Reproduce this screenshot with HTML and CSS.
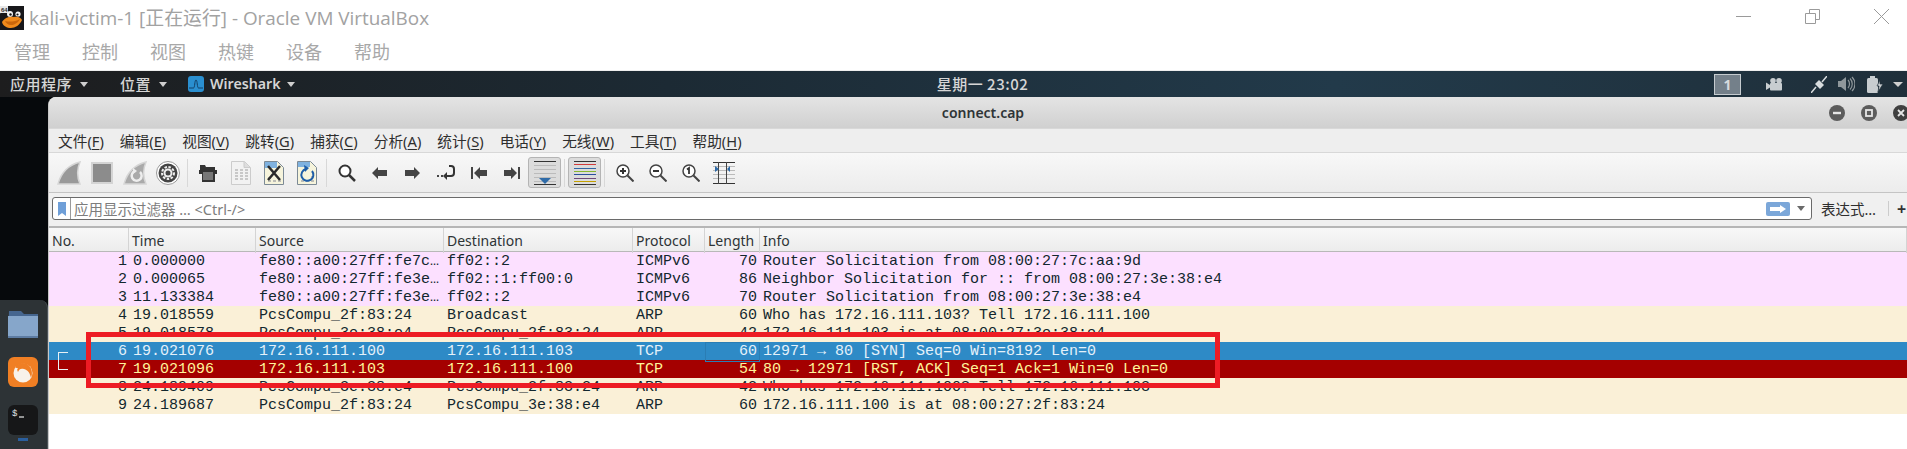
FILE: index.html
```html
<!DOCTYPE html>
<html lang="zh">
<head>
<meta charset="utf-8">
<title>kali-victim-1 - Oracle VM VirtualBox</title>
<link rel="stylesheet" href="styles.css">
</head>
<body>
<header class="vbox">
  <div class="vbox-title">
    <svg class="tux" width="24" height="24" viewBox="0 0 24 24">
      <rect width="24" height="24" fill="#5a5a5a"/>
      <path d="M8 0h16v24H0V8z" fill="#17171a"/>
      <rect width="8" height="7" fill="#e8e8e8"/>
      <text x="1" y="6" class="tux-badge">64</text>
      <circle cx="10" cy="8" r="3" fill="#f4f4f4"/>
      <circle cx="18" cy="8" r="2.600" fill="#f4f4f4"/>
      <circle cx="10.500" cy="8.500" r="1.200" fill="#111"/>
      <circle cx="17.500" cy="8.500" r="1.100" fill="#111"/>
      <path d="M2 16c3-5 8-6 12-5 4-1 7 1 8 3-2 5-7 8-11 8-4 0-8-2-9-6z" fill="#ef8a1c"/>
      <path d="M5 15c4 1 10 1 15-2-2 4-6 6-9 6-3 0-5-2-6-4z" fill="#c9660c"/>
    </svg>
    <h1 class="vbox-name">kali-victim-1 [正在运行] - Oracle VM VirtualBox</h1>
    <div class="vbox-controls">
      <svg width="15" height="15" viewBox="0 0 15 15"><path d="M0 7.500h15" stroke="#9a9a9a" fill="none"/></svg>
      <svg width="15" height="15" viewBox="0 0 15 15"><path d="M.5 4.500h10v10H.5zM4.500 4.500V.5h10v10h-4" stroke="#9a9a9a" fill="none"/></svg>
      <svg width="15" height="15" viewBox="0 0 15 15"><path d="M0 0l15 15M15 0L0 15" stroke="#9a9a9a" fill="none"/></svg>
    </div>
  </div>
  <nav class="vbox-menu"><span>管理</span><span>控制</span><span>视图</span><span>热键</span><span>设备</span><span>帮助</span></nav>
</header>

<div class="guest">
  <div class="panel">
    <div class="panel-left">
      <span class="panel-item">应用程序<i class="caret"></i></span>
      <span class="panel-item">位置<i class="caret"></i></span>
      <span class="panel-item panel-app">
        <svg width="16" height="16" viewBox="0 0 16 16"><rect width="16" height="16" rx="3" fill="#2a8fd0"/><path d="M1 12h4.500c1.500 0 1-8 2.500-8s1 8 2.500 8H15" stroke="#123f66" fill="none"/></svg>
        Wireshark<i class="caret"></i>
      </span>
    </div>
    <div class="panel-clock">星期一 23:02</div>
    <div class="panel-right">
      <span class="workspace">1</span>
      <svg class="ind-cam" width="16" height="13" viewBox="0 0 16 13"><circle cx="7" cy="2.800" r="2.800" fill="#c8cdd0"/><circle cx="13" cy="2.800" r="2.800" fill="#c8cdd0"/><rect x="4" y="5" width="12" height="7.500" rx="1" fill="#c8cdd0"/><path d="M0 4.500l4 2.500v2.500L0 12z" fill="#c8cdd0"/></svg>
      <svg class="ind-plug" width="16" height="17" viewBox="0 0 16 17"><path d="M0 17l5-6M11 6l5-6" stroke="#d8dcde" stroke-width="1.500" fill="none"/><path d="M4 8l4-4 5 5-4 4z" fill="#d8dcde"/></svg>
      <svg class="ind-vol" width="17" height="16" viewBox="0 0 17 16"><path d="M0 5h3l5-4v14l-5-4H0z" fill="#8f979b"/><path d="M10 4c2 2 2 6 0 8M12 2.500c3 3 3 8 0 11M14 1c4 4 4 10 0 14" stroke="#8f979b" stroke-width="1.200" fill="none"/></svg>
      <svg class="ind-bat" width="16" height="17" viewBox="0 0 16 17"><rect x="3" y="0" width="5" height="2" fill="#c8cdd0"/><rect x="0" y="2" width="11" height="15" rx="1.500" fill="#c8cdd0"/><path d="M13 4l-3 6h2l-1 6 5-8h-3z" fill="#c8cdd0" stroke="#1f2f3a" stroke-width=".7"/></svg>
      <i class="caret caret-big"></i>
    </div>
  </div>

  <div class="desktop">
    <aside class="dock-col">
      <div class="dock">
        <svg class="dock-folder" width="30" height="27" viewBox="0 0 30 27"><path d="M1 0h12l3 3h14v24H0z" fill="#46668f"/><path d="M0 5h30v22H0z" fill="#86a6ca"/><path d="M0 25h30v2H0z" fill="#5d7ca3"/></svg>
        <svg width="30" height="30" viewBox="0 0 30 30"><rect width="30" height="30" rx="6" fill="#f07f24"/><circle cx="15" cy="16" r="9.500" fill="#f8f2ea"/><path d="M7 10c3-4 8-5 12-3 5 3 6 9 4 14-1-5-3-8-7-9-3-1-5 0-6 3-1-2-1-3 0-4-1 0-2 0-3-1z" fill="#f07f24"/><circle cx="15.500" cy="17" r="3.500" fill="#f8f2ea"/></svg>
        <svg width="30" height="30" viewBox="0 0 30 30"><rect width="30" height="30" rx="6" fill="#161718"/><text x="4" y="11" class="term-prompt">$</text><path d="M11 12h5" stroke="#e8e8e8" stroke-width="1.200"/></svg>
        <i class="dock-dot"></i>
      </div>
    </aside>

    <main class="ws-window">
      <div class="ws-titlebar">
        <span class="ws-title">connect.cap</span>
        <div class="ws-btns">
          <svg width="16" height="16" viewBox="0 0 16 16"><circle cx="8" cy="8" r="8" fill="#5c5c5c"/><rect x="4" y="6.800" width="8" height="2.400" fill="#e6e6e6"/></svg>
          <svg width="16" height="16" viewBox="0 0 16 16"><circle cx="8" cy="8" r="8" fill="#5c5c5c"/><rect x="5" y="5" width="6" height="6" fill="none" stroke="#e6e6e6" stroke-width="1.800"/></svg>
          <svg width="16" height="16" viewBox="0 0 16 16"><circle cx="8" cy="8" r="8" fill="#3f3f3f"/><path d="M5 5l6 6M11 5l-6 6" stroke="#e6e6e6" stroke-width="1.800"/></svg>
        </div>
      </div>

      <nav class="ws-menu">
        <span>文件(<u>F</u>)</span><span>编辑(<u>E</u>)</span><span>视图(<u>V</u>)</span><span>跳转(<u>G</u>)</span><span>捕获(<u>C</u>)</span><span>分析(<u>A</u>)</span><span>统计(<u>S</u>)</span><span>电话(<u>Y</u>)</span><span>无线(<u>W</u>)</span><span>工具(<u>T</u>)</span><span>帮助(<u>H</u>)</span>
      </nav>

      <div class="ws-toolbar">
        <span class="tb"><svg width="24" height="24" viewBox="0 0 24 24"><path d="M1 23C4 12 11 4 23 1c-3 7-3 15 0 22z" fill="#999" stroke="#d6d6d6" stroke-width="1.500"/></svg></span>
        <span class="tb"><svg width="22" height="22" viewBox="0 0 22 22"><rect x="1" y="1" width="20" height="20" fill="#8c8c8c" stroke="#d4d4d4" stroke-width="2"/></svg></span>
        <span class="tb"><svg width="24" height="24" viewBox="0 0 24 24"><path d="M1 23C4 12 11 4 23 1c-3 7-3 15 0 22z" fill="#aaa" stroke="#d6d6d6" stroke-width="1.500"/><path d="M17 11a5 5 0 1 1-5-1" fill="none" stroke="#eee" stroke-width="2.500"/><path d="M10 7l4 3-4 3z" fill="#eee"/></svg></span>
        <span class="tb"><svg width="24" height="24" viewBox="0 0 24 24"><circle cx="12" cy="12" r="11.500" fill="#fff" stroke="#999"/><circle cx="12" cy="12" r="9.500" fill="#444"/><circle cx="12" cy="12" r="6" fill="none" stroke="#eee" stroke-width="2" stroke-dasharray="2.500 1.500"/><circle cx="12" cy="12" r="4.500" fill="#eee"/><circle cx="12" cy="12" r="2.500" fill="#444"/></svg></span>
        <span class="tb-sep"></span>
        <span class="tb"><svg width="18" height="20" viewBox="0 0 18 20"><path d="M1 2h5l1 2h9v3H1z" fill="#333"/><path d="M0 7h18v4h-2v8H3v-8H0z" fill="#333"/><rect x="4" y="9" width="10" height="8" fill="#777"/></svg></span>
        <span class="tb"><svg width="20" height="24" viewBox="0 0 20 24"><path d="M.5.5h13l6 6v17H.5z" fill="#f2f2f2" stroke="#ccc"/><path d="M13 .5v6h6" fill="#ddd" stroke="#ccc"/><path d="M4 9h3M9 9h3M14 9h3M4 12h3M9 12h3M14 12h3M4 15h3M9 15h3M14 15h3M4 18h3M9 18h3M14 18h3" stroke="#bbb" stroke-width="1.500" fill="none"/></svg></span>
        <span class="tb"><svg width="20" height="24" viewBox="0 0 20 24"><path d="M.5.5h13l6 6v17H.5z" fill="#f6f4dc" stroke="#7c8a96"/><path d="M1 1h12v6H1z" fill="#7fb2e0"/><path d="M4 17h3M9 20h3M14 20h3M4 20h3" stroke="#aaa" stroke-width="1.500" fill="none"/><path d="M4 5l12 14M16 5L4 19" stroke="#2b2b2b" stroke-width="2.500" fill="none"/></svg></span>
        <span class="tb"><svg width="20" height="24" viewBox="0 0 20 24"><path d="M.5.5h13l6 6v17H.5z" fill="#f6f4dc" stroke="#7c8a96"/><path d="M1 1h12v5H1z" fill="#7fb2e0"/><path d="M4 20h3M9 20h3M14 20h3M14 16h3" stroke="#aaa" stroke-width="1.500" fill="none"/><path d="M15 10a6 6 0 1 1-6-2" fill="none" stroke="#1e5ea8" stroke-width="2"/><path d="M7 4l5 3-4 4z" fill="#1e5ea8"/></svg></span>
        <span class="tb-sep"></span>
        <span class="tb"><svg width="18" height="18" viewBox="0 0 18 18"><circle cx="7" cy="7" r="5.500" fill="#fff" stroke="#333" stroke-width="2"/><path d="M11 11l6 6" stroke="#333" stroke-width="2.500"/></svg></span>
        <span class="tb"><svg width="15" height="12" viewBox="0 0 15 12"><path d="M0 6l6-6v3h9v6H6v3z" fill="#444"/></svg></span>
        <span class="tb"><svg width="15" height="12" viewBox="0 0 15 12"><path d="M15 6L9 0v3H0v6h9v3z" fill="#444"/></svg></span>
        <span class="tb"><svg width="18" height="16" viewBox="0 0 18 16"><path d="M0 10h2v2H0zM4 10h2v2H4z" fill="#444"/><path d="M12 1h2a3 3 0 0 1 3 3v4a3 3 0 0 1-3 3H9" stroke="#333" stroke-width="2" fill="none"/><path d="M10 7v8l-4-4z" fill="#333"/></svg></span>
        <span class="tb"><svg width="16" height="14" viewBox="0 0 16 14"><rect y="1" width="2" height="12" fill="#444"/><path d="M3 7l6-6v3h7v6H9v3z" fill="#444"/></svg></span>
        <span class="tb"><svg width="16" height="14" viewBox="0 0 16 14"><rect x="14" y="1" width="2" height="12" fill="#444"/><path d="M13 7L7 1v3H0v6h7v3z" fill="#444"/></svg></span>
        <span class="tb tb-on"><svg width="22" height="24" viewBox="0 0 22 24"><path d="M0 .5h22M0 23.500h22" stroke="#333" fill="none"/><path d="M0 4.500h22M0 8.500h22M0 12.500h22M0 16.500h22M0 20.500h22" stroke="#bbb" fill="none"/><path d="M5 17h12l-6 6z" fill="#2f6ba8"/></svg></span>
        <span class="tb-sep"></span>
        <span class="tb tb-on"><svg width="22" height="24" viewBox="0 0 22 24"><path d="M0 .5h22M0 23.500h22" stroke="#333" fill="none"/><path d="M0 3.500h22" stroke="#d23b3b"/><path d="M0 7.500h22" stroke="#3465a4"/><path d="M0 10.500h22" stroke="#8ab62e"/><path d="M0 13.500h22" stroke="#2c4f9e"/><path d="M0 17.500h22" stroke="#6f4a7a"/><path d="M0 20.500h22" stroke="#c4a000"/></svg></span>
        <span class="tb-sep"></span>
        <span class="tb"><svg width="18" height="18" viewBox="0 0 18 18"><circle cx="7" cy="7" r="6" fill="#fff" stroke="#444" stroke-width="1.500"/><path d="M11.500 11.500l6 6" stroke="#444" stroke-width="2"/><path d="M4 7h6M7 4v6" stroke="#333" stroke-width="2"/></svg></span>
        <span class="tb"><svg width="18" height="18" viewBox="0 0 18 18"><circle cx="7" cy="7" r="6" fill="#fff" stroke="#444" stroke-width="1.500"/><path d="M11.500 11.500l6 6" stroke="#444" stroke-width="2"/><path d="M4 7h6" stroke="#333" stroke-width="2"/></svg></span>
        <span class="tb"><svg width="18" height="18" viewBox="0 0 18 18"><circle cx="7" cy="7" r="6" fill="#fff" stroke="#444" stroke-width="1.500"/><path d="M11.500 11.500l6 6" stroke="#444" stroke-width="2"/><path d="M5 5.500l2-1.500v6" stroke="#333" stroke-width="1.800" fill="none"/></svg></span>
        <span class="tb"><svg width="22" height="22" viewBox="0 0 22 22"><path d="M0 .5h22M0 21.500h22" stroke="#333" fill="none"/><path d="M0 4.500h22M0 8.500h22M0 12.500h22M0 16.500h22" stroke="#bbb" fill="none"/><path d="M5.500 0v22M13.500 0v22" stroke="#444" fill="none"/><path d="M2 4l4 3-4 3zM17 4l-3 3 3 3z" fill="#2f6ba8"/></svg></span>
      </div>

      <div class="ws-filter">
        <div class="filter-input">
          <span class="filter-mark"><svg width="8" height="14" viewBox="0 0 8 14"><path d="M0 0h8v14l-4-3-4 3z" fill="#6f9fd8"/></svg></span>
          <span class="filter-text">应用显示过滤器 … &lt;Ctrl-/&gt;</span>
          <span class="filter-go"><svg width="16" height="8" viewBox="0 0 16 8"><path d="M0 2h10V0l6 4-6 4V6H0z" fill="#fff"/></svg></span>
          <i class="filter-drop"></i>
        </div>
        <span class="filter-expr">表达式…</span>
        <span class="filter-sep"></span>
        <span class="filter-plus">+</span>
      </div>

      <div class="packets">
        <div class="pk-head">
          <span>No.</span><span>Time</span><span>Source</span><span>Destination</span><span>Protocol</span><span>Length</span><span>Info</span>
        </div>
        <div class="pk-row icmp"><span class="no">1</span><span>0.000000</span><span>fe80::a00:27ff:fe7c…</span><span>ff02::2</span><span>ICMPv6</span><span class="len">70</span><span>Router Solicitation from 08:00:27:7c:aa:9d</span></div>
        <div class="pk-row icmp"><span class="no">2</span><span>0.000065</span><span>fe80::a00:27ff:fe3e…</span><span>ff02::1:ff00:0</span><span>ICMPv6</span><span class="len">86</span><span>Neighbor Solicitation for :: from 08:00:27:3e:38:e4</span></div>
        <div class="pk-row icmp"><span class="no">3</span><span>11.133384</span><span>fe80::a00:27ff:fe3e…</span><span>ff02::2</span><span>ICMPv6</span><span class="len">70</span><span>Router Solicitation from 08:00:27:3e:38:e4</span></div>
        <div class="pk-row arp"><span class="no">4</span><span>19.018559</span><span>PcsCompu_2f:83:24</span><span>Broadcast</span><span>ARP</span><span class="len">60</span><span>Who has 172.16.111.103? Tell 172.16.111.100</span></div>
        <div class="pk-row arp"><span class="no">5</span><span>19.018578</span><span>PcsCompu_3e:38:e4</span><span>PcsCompu_2f:83:24</span><span>ARP</span><span class="len">42</span><span>172.16.111.103 is at 08:00:27:3e:38:e4</span></div>
        <div class="pk-row sel"><span class="no conv-start">6</span><span>19.021076</span><span>172.16.111.100</span><span>172.16.111.103</span><span>TCP</span><span class="len focus">60</span><span>12971 → 80 [SYN] Seq=0 Win=8192 Len=0</span></div>
        <div class="pk-row rst"><span class="no conv-end">7</span><span>19.021096</span><span>172.16.111.103</span><span>172.16.111.100</span><span>TCP</span><span class="len">54</span><span>80 → 12971 [RST, ACK] Seq=1 Ack=1 Win=0 Len=0</span></div>
        <div class="pk-row arp"><span class="no">8</span><span>24.189409</span><span>PcsCompu_3e:38:e4</span><span>PcsCompu_2f:83:24</span><span>ARP</span><span class="len">42</span><span>Who has 172.16.111.100? Tell 172.16.111.103</span></div>
        <div class="pk-row arp"><span class="no">9</span><span>24.189687</span><span>PcsCompu_2f:83:24</span><span>PcsCompu_3e:38:e4</span><span>ARP</span><span class="len">60</span><span>172.16.111.100 is at 08:00:27:2f:83:24</span></div>
        <div class="annotation"></div>
      </div>
    </main>
  </div>
</div>
</body>
</html>
```
FILE: styles.css
```css
* { box-sizing: border-box; }
html, body { margin: 0; padding: 0; }
body {
  width: 1907px;
  height: 449px;
  overflow: hidden;
  background: #fff;
  font-family: "Noto Sans", "Noto Sans CJK SC", sans-serif;
}
svg { display: block; flex: none; }

/* VirtualBox host chrome */
.vbox { height: 70px; background: #fff; color: #a2a2a2; }
.vbox-title { height: 35px; display: flex; align-items: center; padding: 0 18px 0 0; }
.tux-badge { font: 700 6px "Liberation Sans", sans-serif; fill: #333; }
.vbox-name {
  margin: 0 0 0 5px;
  font: 400 18.900px/24px "Open Sans", "Noto Sans CJK SC", sans-serif;
  color: #a2a2a2;
  white-space: nowrap;
}
.vbox-controls { margin-left: auto; display: flex; gap: 54px; margin-top: -2px; }
.vbox-menu {
  height: 35px;
  display: flex;
  gap: 32px;
  padding-left: 14px;
  font: 400 18px/32px "Noto Sans CJK SC", sans-serif;
  color: #a8a8a8;
}

/* Guest desktop */
.guest { height: 379px; display: flex; flex-direction: column; background: #06090c; }
.panel {
  height: 27px;
  flex: none;
  display: grid;
  grid-template-columns: 1fr auto 1fr;
  align-items: center;
  background: linear-gradient(90deg, #1d1d1e 0%, #1c2a34 35%, #223a4a 70%, #1f2f3a 100%);
  border-top: 1px solid #eee;
  color: #d6d6d6;
  font: 500 15px/26px "Noto Sans CJK SC", "Noto Sans", sans-serif;
}
.panel-left { display: flex; align-items: center; padding-left: 10px; }
.panel-item { display: flex; align-items: center; gap: 8px; margin-right: 32px; letter-spacing: 0.5px; white-space: nowrap; }
.panel-app { gap: 6px; margin-left: -11px; font: 600 14.200px/26px "Noto Sans", sans-serif; letter-spacing: 0; }
.caret { display: block; width: 0; height: 0; border: 4.500px solid transparent; border-top: 5px solid #cfcfcf; border-bottom: 0; margin-left: 0; }
.caret-big { border-left-width: 5px; border-right-width: 5px; margin-left: 10px; }
.panel-clock { font-size: 15px; padding-left: 58px; letter-spacing: 0.5px; white-space: nowrap; }
.panel-right { display: flex; align-items: center; justify-content: flex-end; padding-right: 4px; }
.workspace {
  width: 27px; height: 21px;
  background: #74808a;
  border: 1px solid #c5cbcf;
  color: #d6dadd;
  font: 700 14px/19px "Noto Sans", sans-serif;
  text-align: center;
}
.ind-cam { margin-left: 25px; }
.ind-plug { margin-left: 29px; }
.ind-vol { margin-left: 11px; }
.ind-bat { margin-left: 12px; }

.desktop { flex: 1; min-height: 0; display: flex; }
.dock-col { width: 48px; flex: none; display: flex; flex-direction: column; justify-content: flex-end; }
.dock {
  height: 149px;
  background: #2d3336;
  border-radius: 0 8px 0 0;
  border-right: 1px solid #4b5357;
  display: flex;
  flex-direction: column;
  align-items: center;
  padding: 11px 2px 0 0;
  gap: 18px;
}
.dock-folder { margin-bottom: 1px; }
.term-prompt { font: 400 9px "Liberation Mono", monospace; fill: #e8e8e8; }
.dock-dot { width: 10px; height: 3px; background: #2b5f9e; margin-top: -15px; }

/* Wireshark window */
.ws-window {
  flex: 1;
  min-width: 0;
  display: flex;
  flex-direction: column;
  background: #fff;
  border-radius: 8px 0 0 0;
  border-left: 1px solid #c8c8c8;
  overflow: hidden;
}
.ws-titlebar {
  height: 32px;
  flex: none;
  display: flex;
  align-items: center;
  justify-content: center;
  background: linear-gradient(#e4e4e4, #d0d0d0);
  border-bottom: 1px solid #d8d8d8;
  position: relative;
}
.ws-title { font: 600 14px/30px "Noto Sans", sans-serif; color: #2e3436; margin-left: 10px; }
.ws-btns { position: absolute; right: -2px; top: 8px; display: flex; gap: 16px; }
.ws-menu {
  height: 24px;
  flex: none;
  display: flex;
  gap: 16px;
  padding-left: 9px;
  background: #eeeeee;
  border-bottom: 1px solid #d8d8d8;
  font: 400 14.700px/24px "Noto Sans", "Noto Sans CJK SC", sans-serif;
  color: #2e2e2e;
  white-space: nowrap;
}
.ws-menu u { text-underline-offset: 2px; }
.ws-toolbar {
  height: 40px;
  flex: none;
  display: flex;
  align-items: center;
  padding-left: 3px;
  background: linear-gradient(#f8f8f8, #ececec);
  border-bottom: 1px solid #c4c4c4;
}
.tb { width: 33px; height: 31px; flex: none; display: flex; align-items: center; justify-content: center; }
.tb-on { background: #dcdcdc; border: 1px solid #b4b4b4; border-radius: 3px; }
.tb-sep { width: 7px; height: 28px; flex: none; display: flex; justify-content: center; }
.tb-sep::before { content: ""; width: 1px; background: #d8d8d8; }
.ws-filter {
  height: 35px;
  flex: none;
  display: flex;
  align-items: center;
  padding: 0 0 2px 3px;
  background: #f0f0f0;
  border-bottom: 2px solid #b6b6b6;
}
.filter-input {
  width: 1760px;
  height: 23px;
  display: flex;
  align-items: center;
  background: #fff;
  border: 1px solid #6a6a6a;
  border-radius: 3px;
}
.filter-mark { width: 18px; height: 21px; display: flex; align-items: center; justify-content: center; border-right: 1px solid #9a9a9a; }
.filter-text { margin-left: 3px; font: 400 14.500px/20px "Noto Sans", "Noto Sans CJK SC", sans-serif; color: #7d7d7d; white-space: nowrap; }
.filter-go { margin-left: auto; width: 24px; height: 14px; background: #7ba7d9; border-radius: 2px; display: flex; align-items: center; justify-content: center; }
.filter-drop { width: 0; height: 0; border: 4px solid transparent; border-top: 5px solid #6a6a6a; border-bottom: 0; margin: 0 6px 0 7px; }
.filter-expr { margin-left: 9px; font: 400 14.500px/20px "Noto Sans", "Noto Sans CJK SC", sans-serif; color: #2e2e2e; white-space: nowrap; }
.filter-sep { width: 1px; height: 15px; background: #ccc; margin-left: 12px; }
.filter-plus { margin-left: 8px; font: 700 16px/20px "Noto Sans", sans-serif; color: #333; }

.packets { flex: 1; min-height: 0; position: relative; background: #fff; }
.pk-head, .pk-row { display: grid; grid-template-columns: 80px 127px 188px 189px 72px 55px 1fr; }
.pk-head {
  height: 24px;
  background: linear-gradient(#f8f8f8, #ececec);
  border-bottom: 1px solid #b8b8b8;
  font: 400 14px/25px "Noto Sans", sans-serif;
  color: #2e3436;
  white-space: nowrap;
}
.pk-head span { padding-left: 3px; border-right: 1px solid #d4d4d4; }
.pk-row {
  height: 18px;
  font: 400 15px/20px "Liberation Mono", monospace;
  white-space: pre;
}
.pk-row span { padding-left: 3px; overflow: hidden; }
.pk-row span:nth-child(2) { padding-left: 4px; }
.pk-row .no { text-align: right; padding: 0 2px 0 0; position: relative; overflow: visible; }
.pk-row .len { text-align: right; padding: 0 3px 0 0; }
.icmp { background: #fce0ff; color: #12272e; }
.arp { background: #faf0d7; color: #12272e; }
.sel { background: #2e8ac6; color: #e4f1fa; }
.rst { background: #a40000; color: #fff59a; }
.focus { box-shadow: inset 0 0 0 1px #2a7db4; }
.conv-start::before, .conv-end::before {
  content: "";
  position: absolute;
  left: 9px;
  width: 9px;
  height: 9px;
  border-left: 1px solid #e8f0f4;
}
.conv-start::before { bottom: 0; border-top: 1px solid #e8f0f4; }
.conv-end::before { top: 0; border-bottom: 1px solid #e8f0f4; }
.annotation {
  position: absolute;
  left: 37px;
  top: 104px;
  width: 1134px;
  height: 56px;
  border: 5px solid #ed1c24;
}
```
